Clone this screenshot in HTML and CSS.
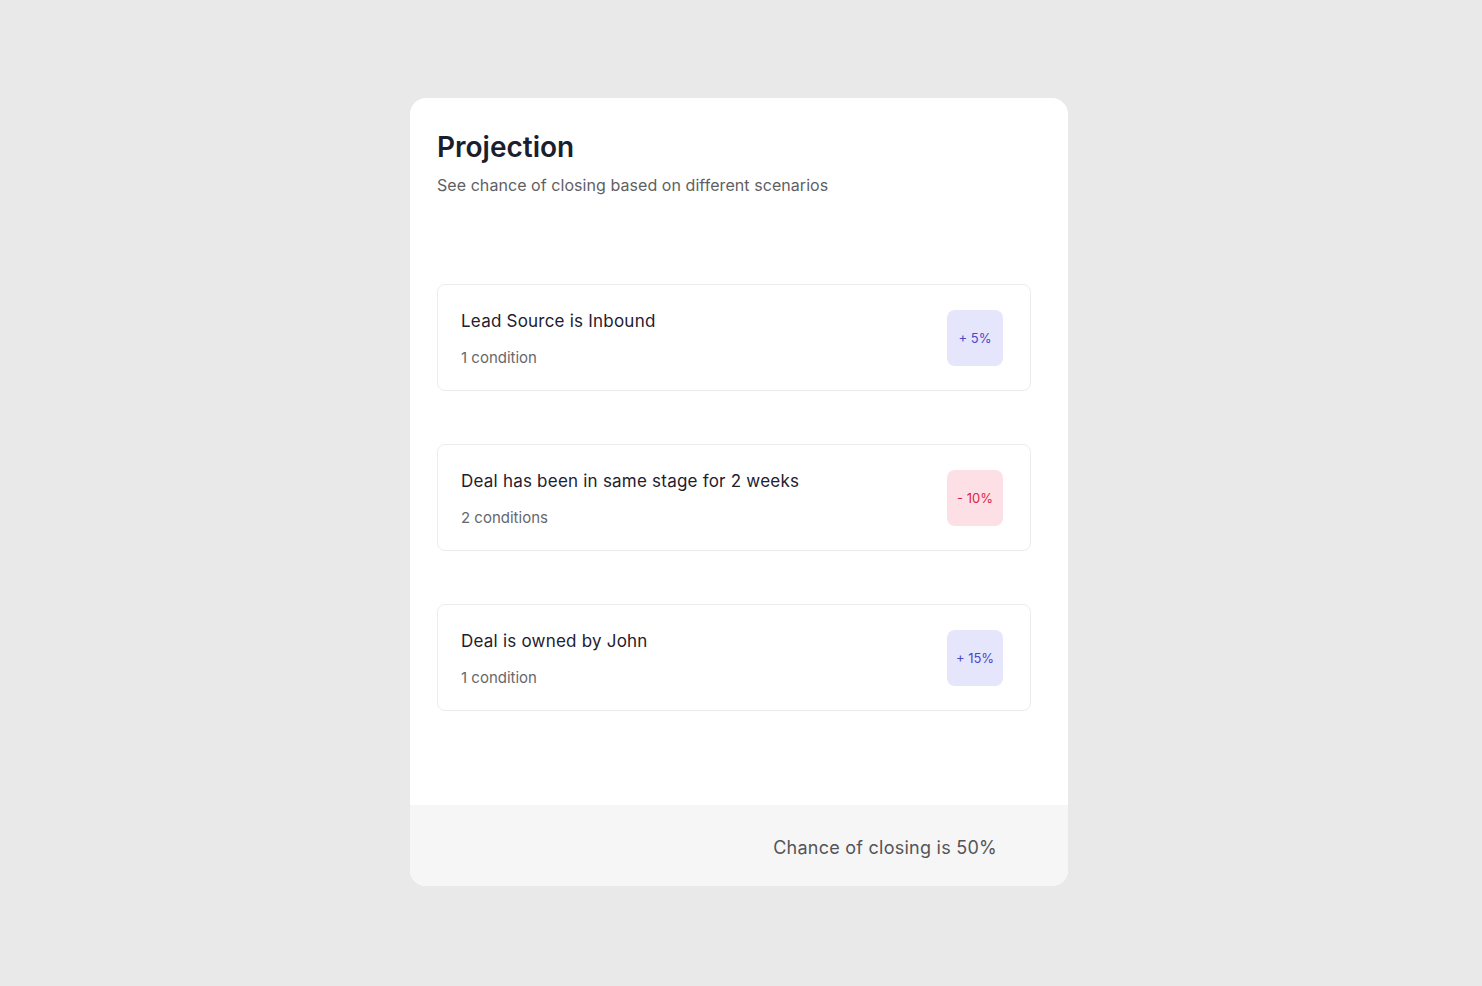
FILE: index.html
```html
<!DOCTYPE html>
<html lang="en">
<head>
<meta charset="utf-8">
<title>Projection</title>
<link rel="stylesheet" href="styles.css">
</head>
<body>
<main class="card">
  <div class="card-body">
    <h1 class="title">Projection</h1>
    <p class="subtitle">See chance of closing based on different scenarios</p>
    <ul class="scenarios">
      <li class="scenario">
        <div class="scenario-text">
          <div class="scenario-title">Lead Source is Inbound</div>
          <div class="scenario-sub">1 condition</div>
        </div>
        <span class="badge badge-up">+ 5%</span>
      </li>
      <li class="scenario">
        <div class="scenario-text">
          <div class="scenario-title">Deal has been in same stage for 2 weeks</div>
          <div class="scenario-sub">2 conditions</div>
        </div>
        <span class="badge badge-down">- 10%</span>
      </li>
      <li class="scenario">
        <div class="scenario-text">
          <div class="scenario-title">Deal is owned by John</div>
          <div class="scenario-sub">1 condition</div>
        </div>
        <span class="badge badge-up">+ 15%</span>
      </li>
    </ul>
  </div>
  <footer class="card-footer">Chance of closing is 50%</footer>
</main>
</body>
</html>
```
FILE: styles.css
```css
* { box-sizing: border-box; }
html, body { margin: 0; padding: 0; }
body {
  background: #e9e9e9;
  font-family: Inter, "Noto Sans", "Liberation Sans", sans-serif;
  min-height: 986px;
  display: flex;
  justify-content: center;
  align-items: flex-start;
  padding-top: 98px;
  padding-right: 4px;
}
.card {
  width: 658px;
  background: #ffffff;
  border-radius: 16px;
  overflow: hidden;
}
.card-body {
  padding: 32px 37px 94px 27px;
}
.title {
  margin: 0;
  font-size: 28px;
  line-height: 34px;
  font-weight: 600;
  color: #1b1e2c;
  letter-spacing: 0;
}
.subtitle {
  margin: 9px 0 0;
  font-size: 16px;
  line-height: 24px;
  color: #5f5f63;
  letter-spacing: 0.06px;
}
.scenarios {
  list-style: none;
  margin: 87px 0 0;
  padding: 0;
  display: flex;
  flex-direction: column;
  gap: 53px;
}
.scenario {
  display: flex;
  align-items: flex-start;
  justify-content: space-between;
  border: 1px solid #ececec;
  border-radius: 8px;
  padding: 25px 27px 23px 23px;
}
.scenario-title {
  font-size: 17px;
  line-height: 22px;
  color: #1e2030;
  letter-spacing: 0.22px;
}
.scenario-sub {
  margin-top: 17px;
  font-size: 15px;
  line-height: 18px;
  color: #67676b;
}
.badge {
  width: 56px;
  height: 56px;
  border-radius: 8px;
  display: flex;
  align-items: center;
  justify-content: center;
  font-size: 13px;
  flex-shrink: 0;
}
.badge-up {
  background: #e5e5fc;
  color: #4d47c9;
}
.badge-down {
  background: #fde0e5;
  color: #dc2647;
}
.card-footer {
  background: #f6f6f6;
  height: 81px;
  padding: 31px 71px 0 0;
  text-align: right;
  font-size: 18px;
  line-height: 24px;
  color: #545458;
  letter-spacing: 0.25px;
}
```
